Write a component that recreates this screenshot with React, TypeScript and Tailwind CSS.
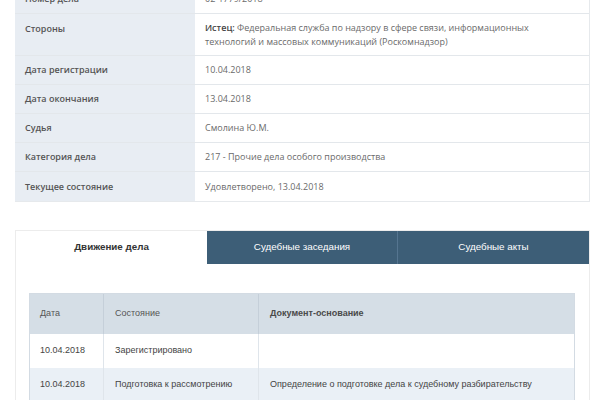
import React from 'react';

const caseInfo: { label: string; value: React.ReactNode; tall?: boolean }[] = [
  { label: 'Номер дела', value: '02-1779/2018' },
  {
    label: 'Стороны',
    tall: true,
    value: (
      <>
        <span className="font-semibold text-[#444]">Истец:</span> Федеральная служба по надзору в сфере связи, информационных
        <br />
        технологий и массовых коммуникаций (Роскомнадзор)
      </>
    )
  },
  { label: 'Дата регистрации', value: '10.04.2018' },
  { label: 'Дата окончания', value: '13.04.2018' },
  { label: 'Судья', value: 'Смолина Ю.М.' },
  { label: 'Категория дела', value: '217 - Прочие дела особого производства' },
  { label: 'Текущее состояние', value: 'Удовлетворено, 13.04.2018' }
];

const movements = [
  { date: '10.04.2018', state: 'Зарегистрировано', doc: '' },
  {
    date: '10.04.2018',
    state: 'Подготовка к рассмотрению',
    doc: 'Определение о подготовке дела к судебному разбирательству'
  },
  { date: '13.04.2018', state: 'Рассмотрение', doc: 'Решение' }
];

const App = () => {
  return (
    <div className="w-[600px] h-[400px] overflow-hidden bg-white">
      <div className="pl-[15px] pr-[10px] -mt-[15px]">
        {/* Case info */}
        <div className="border-r border-b border-[#e6e9ec] font-['Open_Sans',sans-serif] text-[9px]">
          {caseInfo.map(row => (
            <div
              key={row.label}
              className={`grid grid-cols-[180px_1fr] border-b border-[#e3e7eb] last:border-b-0 ${
                row.tall ? 'h-[42px]' : 'h-[29px]'
              }`}
            >
              <div
                className={`bg-[#e8edf3] pl-[10px] font-semibold text-[#555] flex ${
                  row.tall ? 'items-start pt-[8px]' : 'items-center'
                }`}
              >
                {row.label}
              </div>
              <div
                className={`pl-[10px] text-[#6a6a6a] leading-[14px] flex ${
                  row.tall ? 'items-start pt-[7px]' : 'items-center'
                }`}
              >
                <div>{row.value}</div>
              </div>
            </div>
          ))}
        </div>

        {/* Case movement */}
        <div className="mt-[28px] border border-[#ececec] border-b-0 h-[200px] font-['Liberation_Sans',Arial,sans-serif] text-[9px]">
          <div className="grid grid-cols-3 h-[33px] text-[9.8px]">
            <div className="flex items-center justify-center font-bold text-[#333]">Движение дела</div>
            <div className="flex items-center justify-center bg-[#3d5e77] text-white border-r border-[#557590]">
              Судебные заседания
            </div>
            <div className="flex items-center justify-center bg-[#3d5e77] text-white">Судебные акты</div>
          </div>

          <div className="pl-[13px] pr-[14px] pt-[29px]">
            <div className="border border-[#d3dbe3] border-b-0">
              <div className="grid grid-cols-[74px_155px_1fr] h-[40px] bg-[#d5dee6] text-[#555]">
                <div className="flex items-center pl-[10px] border-r border-[#c5cfd9]">Дата</div>
                <div className="flex items-center pl-[11px] border-r border-[#c5cfd9]">Состояние</div>
                <div className="flex items-center pl-[11px] font-bold text-[#4a4a4a]">Документ-основание</div>
              </div>
              {movements.map((m, i) => (
                <div
                  key={i}
                  className={`grid grid-cols-[74px_155px_1fr] h-[34px] text-[#444] ${
                    i % 2 === 1 ? 'bg-[#eaf0f6]' : 'bg-white'
                  }`}
                >
                  <div className="flex items-center pl-[10px] border-r border-[#dfe5eb]">{m.date}</div>
                  <div className="flex items-center pl-[11px] border-r border-[#dfe5eb] whitespace-nowrap">{m.state}</div>
                  <div className="flex items-center pl-[11px] whitespace-nowrap">{m.doc}</div>
                </div>
              ))}
            </div>
          </div>
        </div>
      </div>
    </div>
  );
};

export default App;
